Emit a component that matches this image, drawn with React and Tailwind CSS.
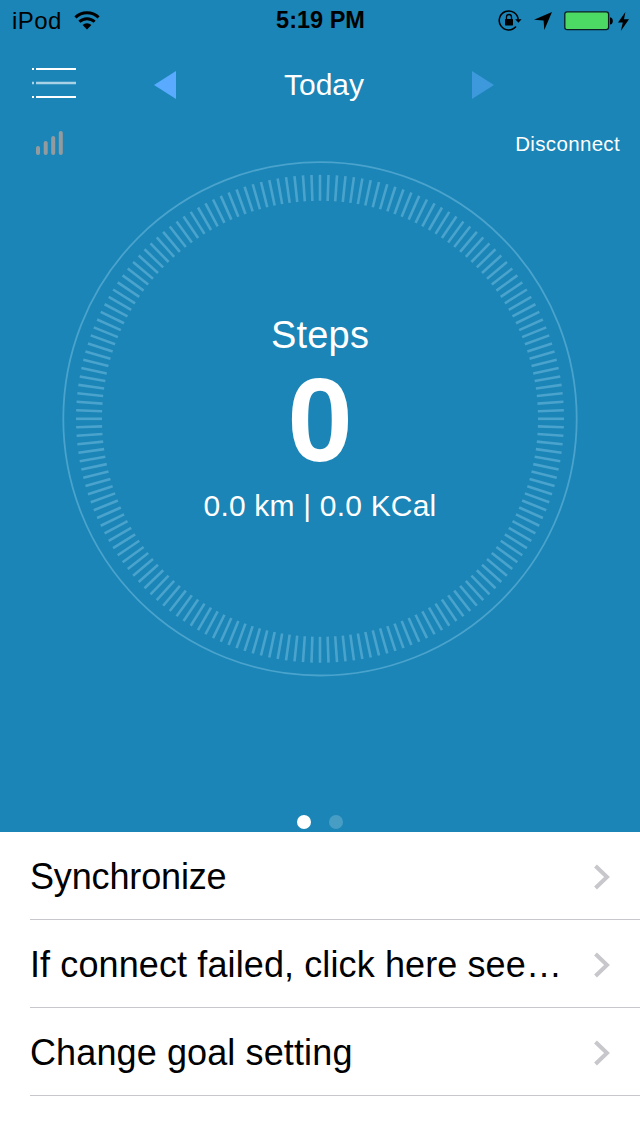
import React from 'react';

const TICKS = 180;

const menuItems = [
  { id: 'sync', label: 'Synchronize', tracking: 'tracking-[-0.15px]' },
  { id: 'help', label: 'If connect failed, click here see…', tracking: 'tracking-[0.11px]' },
  { id: 'goal', label: 'Change goal setting', tracking: 'tracking-[0.12px]' },
];

const StatusBar = () => (
  <div className="grid h-10 grid-cols-3 items-center pl-3 pr-[11px] pt-0.5 text-2xl text-black">
    <div className="flex items-center gap-3">
      <span className="tracking-[0.4px]">iPod</span>
      <svg width="26" height="20" viewBox="0 0 26 20" fill="none" stroke="currentColor">
        <path d="M1.4 6.4 A16.8 16.8 0 0 1 24.6 6.4" strokeWidth="3" />
        <path d="M5.4 10.8 A10.8 10.8 0 0 1 20.6 10.8" strokeWidth="3" />
        <path d="M8.6 14 A6.2 6.2 0 0 1 17.4 14 L13 18.4 Z" fill="currentColor" stroke="none" />
      </svg>
    </div>
    <div className="text-center text-[23.5px] font-bold">5:19 PM</div>
    <div className="flex items-center justify-end">
      {/* Rotation lock */}
      <svg width="24" height="22" viewBox="0 0 24 22" fill="none" stroke="currentColor">
        <path d="M18 16.6 A9.5 9.5 0 1 1 20.2 9.6" strokeWidth="1.5" />
        <path d="M17.2 9.2 H23.6 L20.4 12.8 Z" fill="currentColor" stroke="none" />
        <rect x="7" y="9" width="8" height="6.4" rx="0.6" fill="currentColor" stroke="none" />
        <path d="M8.5 9.6 V7 A2.5 2.5 0 0 1 13.5 7 V9.6" strokeWidth="1.3" />
      </svg>
      {/* Location */}
      <svg className="ml-3" width="18" height="18" viewBox="0 0 18 18" fill="currentColor">
        <path d="M18 0 L10.3 18 L9.6 8.6 L0 7.8 Z" />
      </svg>
      {/* Battery */}
      <svg className="ml-3" width="50" height="20" viewBox="0 0 50 20">
        <rect x="0.8" y="0.8" width="43.8" height="17.8" rx="2.4" fill="#4cd964" stroke="#0b1c24" strokeWidth="1.3" />
        <path d="M46 6.2 C49.8 6.6 49.8 13.2 46 13.6 Z" fill="#000" />
      </svg>
      <svg className="ml-1" width="11" height="19" viewBox="0 0 11 19" fill="currentColor">
        <path d="M7.4 0 L0 10.6 H4.8 L2.8 19 L11 7.2 H6 Z" />
      </svg>
    </div>
  </div>
);

const NavBar = () => (
  <div className="flex h-[88px] items-center pl-8 text-white">
    <button>
      <svg width="44" height="32" viewBox="0 0 44 32">
        <path d="M0 1 H2 M4 1 H44 M0 29 H2 M4 29 H44" stroke="#fff" strokeWidth="2" />
        <path d="M0 15 H2 M4 15 H44" stroke="#a9d2e6" strokeWidth="2.4" />
      </svg>
    </button>
    <button className="ml-[78px] pt-0.5">
      <svg width="22" height="28" viewBox="0 0 22 28">
        <path d="M22 0 V28 L0 14 Z" fill="#5aabff" />
      </svg>
    </button>
    <h1 className="flex-1 text-center text-[30px]">Today</h1>
    <button className="mr-[146px] pt-0.5">
      <svg width="22" height="28" viewBox="0 0 22 28">
        <path d="M0 0 V28 L22 14 Z" fill="#3d98dc" />
      </svg>
    </button>
  </div>
);

const ConnectionRow = () => (
  <div className="flex h-8 items-center justify-between pl-9 pr-5 text-white">
    <svg className="mb-0.5" width="28" height="24" viewBox="0 0 28 24" fill="#949b9f">
      <rect x="0" y="15" width="4" height="9" rx="2" />
      <rect x="7.7" y="10" width="4" height="14" rx="2" />
      <rect x="15.2" y="5" width="4" height="19" rx="2" />
      <rect x="22.8" y="0" width="4" height="24" rx="2" />
    </svg>
    <span className="text-[20.5px] tracking-[0.34px]">Disconnect</span>
  </div>
);

const StepsRing = () => (
  <div className="mx-auto grid size-[518px]">
    <svg className="col-start-1 row-start-1" width="518" height="518" viewBox="-259 -258.8 518 518" fill="none" stroke="#4aa3cd">
      <circle r="256.7" strokeWidth="1.8" />
      {[...Array(TICKS)].map((_, i) => (
        <line key={i} y1="-218" y2="-244" strokeWidth="2.6" transform={`rotate(${(i * 360) / TICKS})`} />
      ))}
    </svg>
    <div className="col-start-1 row-start-1 flex flex-col items-center pt-[152px] text-white">
      <div className="text-[38px] leading-[46px] tracking-[0.2px]">Steps</div>
      <div className="mt-[3px] text-[118px] font-bold leading-[118px]">0</div>
      <div className="mt-[7px] text-[30px] leading-10 tracking-[0.2px]">0.0 km | 0.0 KCal</div>
    </div>
  </div>
);

const MenuRow = ({ label, tracking }) => (
  <li className="flex h-[88px] items-center justify-between border-b border-[#c8c7cc] pr-[30px] pt-0.5">
    <span className={`whitespace-nowrap text-4xl ${tracking}`}>{label}</span>
    <svg width="17" height="26" viewBox="0 0 17 26" fill="none" stroke="#c7c7cc" strokeWidth="4">
      <path d="M2.5 2 L14 13 L2.5 24" />
    </svg>
  </li>
);

const App = () => (
  <div className="flex h-[1136px] w-[640px] flex-col overflow-hidden bg-white font-['Liberation_Sans',Arial,sans-serif]">
    <div className="flex h-[832px] flex-col bg-[#1a85b6]">
      <StatusBar />
      <NavBar />
      <ConnectionRow />
      <StepsRing />
      {/* Page dots */}
      <div className="mt-auto flex justify-center gap-[18px] pb-[3px]">
        <span className="size-3.5 rounded-full bg-white" />
        <span className="size-3.5 rounded-full bg-[#489dc5]" />
      </div>
    </div>
    <ul className="pl-[30px] text-black">
      {menuItems.map((item) => (
        <MenuRow key={item.id} label={item.label} tracking={item.tracking} />
      ))}
    </ul>
  </div>
);

export default App;
